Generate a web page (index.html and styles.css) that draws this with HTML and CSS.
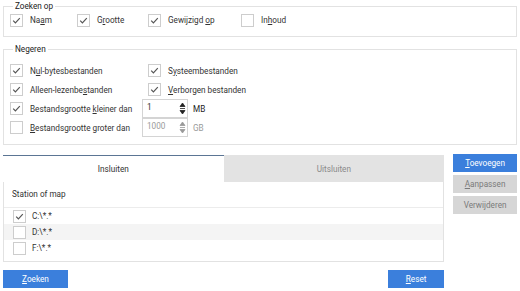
FILE: index.html
```html
<!DOCTYPE html>
<html>
<head>
    <title>Zoeken</title>
    <meta charset="UTF-8">
    <link rel="stylesheet" href="styles.css">
</head>
<body>
<div class="group group-search">
    <div class="group-title">Zoeken op</div>
    <div class="search-row">
        <label class="chk"><span class="box"><svg viewBox="0 0 11 11"><polyline points="2.2,5.6 4.4,7.8 8.8,3.2"/></svg></span><span>Na<u>a</u>m</span></label>
        <label class="chk"><span class="box"><svg viewBox="0 0 11 11"><polyline points="2.2,5.6 4.4,7.8 8.8,3.2"/></svg></span><span>G<u>r</u>ootte</span></label>
        <label class="chk"><span class="box"><svg viewBox="0 0 11 11"><polyline points="2.2,5.6 4.4,7.8 8.8,3.2"/></svg></span><span>Gewijzigd <u>o</u>p</span></label>
        <label class="chk"><span class="box"></span><span>In<u>h</u>oud</span></label>
    </div>
</div>

<div class="group group-ignore">
    <div class="group-title">Negeren</div>
    <div class="ignore-row first">
        <label class="chk col1"><span class="box"><svg viewBox="0 0 11 11"><polyline points="2.2,5.6 4.4,7.8 8.8,3.2"/></svg></span><span>N<u>u</u>l-bytesbestanden</span></label>
        <label class="chk"><span class="box"><svg viewBox="0 0 11 11"><polyline points="2.2,5.6 4.4,7.8 8.8,3.2"/></svg></span><span>S<u>y</u>steembestanden</span></label>
    </div>
    <div class="ignore-row">
        <label class="chk col1"><span class="box"><svg viewBox="0 0 11 11"><polyline points="2.2,5.6 4.4,7.8 8.8,3.2"/></svg></span><span>Alleen-lezenbe<u>s</u>tanden</span></label>
        <label class="chk"><span class="box"><svg viewBox="0 0 11 11"><polyline points="2.2,5.6 4.4,7.8 8.8,3.2"/></svg></span><span><u>V</u>erborgen bestanden</span></label>
    </div>
    <div class="ignore-row">
        <label class="chk size-label"><span class="box"><svg viewBox="0 0 11 11"><polyline points="2.2,5.6 4.4,7.8 8.8,3.2"/></svg></span><span>Bestandsgrootte <u>k</u>leiner dan</span></label>
        <div class="spin">
            <span class="spin-value">1</span>
            <span class="spin-arrows"><svg viewBox="0 0 7 17"><polygon points="3.5,3 6,6.5 1,6.5"/><line x1="1" y1="8.5" x2="6" y2="8.5"/><polygon points="1,10.5 6,10.5 3.5,14"/></svg></span>
        </div>
        <span class="unit">MB</span>
    </div>
    <div class="ignore-row">
        <label class="chk size-label"><span class="box"></span><span><u>B</u>estandsgrootte groter dan</span></label>
        <div class="spin disabled">
            <span class="spin-value">1000</span>
            <span class="spin-arrows"><svg viewBox="0 0 7 17"><polygon points="3.5,3 6,6.5 1,6.5"/><line x1="1" y1="8.5" x2="6" y2="8.5"/><polygon points="1,10.5 6,10.5 3.5,14"/></svg></span>
        </div>
        <span class="unit disabled">GB</span>
    </div>
</div>

<div class="lower">
    <div class="left-col">
        <div class="tabs">
            <div class="tab-bar">
                <div class="tab active">Insluiten</div>
                <div class="tab">Uitsluiten</div>
            </div>
            <div class="list-head">Station of map</div>
            <div class="list">
                <label class="list-row"><span class="box"><svg viewBox="0 0 11 11"><polyline points="2.2,5.6 4.4,7.8 8.8,3.2"/></svg></span><span>C:\*.*</span></label>
                <label class="list-row alt"><span class="box"></span><span>D:\*.*</span></label>
                <label class="list-row"><span class="box"></span><span>F:\*.*</span></label>
            </div>
        </div>
        <div class="bottom-bar">
            <button class="btn primary btn-search"><u>Z</u>oeken</button>
            <button class="btn primary btn-reset"><u>R</u>eset</button>
        </div>
    </div>
    <div class="side-buttons">
        <button class="btn primary"><u>T</u>oevoegen</button>
        <button class="btn muted"><u>A</u>anpassen</button>
        <button class="btn muted">Verwi<u>j</u>deren</button>
    </div>
</div>
</body>
</html>
```

FILE: styles.css
```css
body {
    margin: 0;
    padding: 0 3px;
    background: #fff;
    font-family: Roboto, "Noto Sans", sans-serif;
    font-size: 8.2px;
    line-height: 12px;
    color: #333;
}

u {
    text-decoration-thickness: 1px;
    text-underline-offset: 1px;
}

/* group boxes */
.group {
    border: 1px solid #e2e2e2;
}
.group-title {
    width: fit-content;
    margin: -7px 0 0 3px;
    padding: 0 2px;
    height: 13px;
    line-height: 13px;
    background: #fff;
    color: #222;
}
.group-search {
    margin-top: 6px;
    padding: 0 0 9px 6px;
}
.group-ignore {
    margin-top: 12px;
    padding: 0 0 7px 6px;
}

.search-row {
    display: grid;
    grid-template-columns: 67px 71px 93px auto;
    height: 14px;
    align-items: center;
}
.ignore-row.first {
    margin-top: 5px;
}
.ignore-row {
    display: flex;
    align-items: center;
    height: 19px;
}
.col1 {
    width: 138px;
}
.size-label {
    width: 132px;
}

.chk {
    display: flex;
    align-items: center;
    white-space: nowrap;
}

.box {
    flex: none;
    width: 11px;
    height: 11px;
    border: 1px solid #cdcdcd;
    background: #fff;
    margin-right: 7px;
    display: flex;
}
.box svg {
    width: 11px;
    height: 11px;
    fill: none;
    stroke: #555;
    stroke-width: 1.2;
}

/* spin boxes */
.spin {
    display: flex;
    width: 46px;
    height: 19px;
    border: 1px solid #d4d4d4;
    box-sizing: border-box;
}
.spin-value {
    flex: 1;
    padding-left: 4px;
    line-height: 15px;
}
.spin-arrows {
    width: 7px;
    margin-right: 1px;
    display: flex;
    align-items: center;
}
.spin-arrows svg {
    width: 7px;
    height: 17px;
    fill: #222;
    stroke: #222;
    stroke-width: 0.8;
}
.spin.disabled .spin-value {
    color: #9a9a9a;
}
.spin.disabled .spin-arrows svg {
    fill: #999;
    stroke: #999;
}
.unit {
    margin-left: 5px;
    color: #222;
}
.unit.disabled {
    color: #9a9a9a;
}

/* lower area */
.lower {
    display: flex;
    gap: 9px;
    margin-top: 9px;
}
.left-col {
    width: 442px;
}
.tabs {
    border: 1px solid #e2e2e2;
    border-top: none;
    margin-top: 1px;
}
.tab-bar {
    display: flex;
    margin: 0 -1px;
}
.tab {
    flex: 1;
    height: 26px;
    line-height: 26px;
    text-align: center;
    background: #e3e3e3;
    color: #8a8a8a;
    border-top: 1px solid #e3e3e3;
}
.tab.active {
    background: #fff;
    color: #333;
    border-top-color: #5b7594;
}
.list-head {
    height: 25px;
    line-height: 25px;
    padding-left: 8px;
    border-bottom: 1px solid #ececec;
}
.list {
    padding-bottom: 5px;
}
.list-row {
    display: flex;
    align-items: center;
    height: 16px;
    padding-left: 9px;
}
.list-row .box {
    margin-right: 6px;
}
.list-row.alt {
    background: #f4f4f4;
}

.bottom-bar {
    display: flex;
    justify-content: space-between;
    margin-top: 8px;
}

/* buttons */
.btn {
    font: inherit;
    border: none;
    height: 18px;
    padding: 0;
    cursor: pointer;
}
.btn.primary {
    background: #3b7fdc;
    color: #fff;
}
.btn.muted {
    background: #d6d6d6;
    color: #7a7a7a;
}
.btn-search {
    width: 65px;
}
.btn-reset {
    width: 56px;
}
.side-buttons {
    display: flex;
    flex-direction: column;
    gap: 3px;
    width: 64px;
}
```
